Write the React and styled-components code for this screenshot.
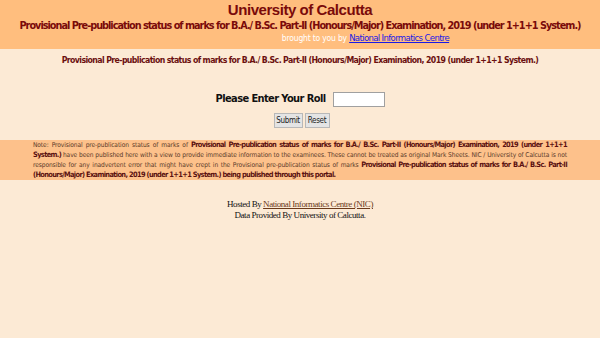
import styled, { createGlobalStyle } from "styled-components";

const Global = createGlobalStyle`
  html, body {
    margin: 0;
    padding: 0;
    background: #fcead5;
  }
  body {
    font-family: "Liberation Sans", Arial, sans-serif;
  }
`;

const Header = styled.header`
  background: #ffbe7e;
  height: 49px;
  text-align: center;
  padding-top: 2px;
  box-sizing: border-box;
`;

const Title = styled.h1`
  margin: 0;
  font: bold 15px/16px "Liberation Sans", Arial, sans-serif;
  letter-spacing: -0.45px;
  color: #7a0a0a;
`;

const SubTitle = styled.h2`
  margin: 1px 0 0;
  font: bold 10.8px/13px "DejaVu Sans Condensed", "DejaVu Sans", sans-serif;
  letter-spacing: -1px;
  color: #7a0a0a;
  white-space: nowrap;
`;

const Credit = styled.div`
  font: 8.5px/11px "DejaVu Sans Condensed", sans-serif;
  letter-spacing: -0.2px;
  color: #ffffff;
  padding-left: 131px;
  a {
    font: 9.5px/11px "DejaVu Sans Condensed", sans-serif;
    letter-spacing: -0.65px;
    color: #1a1ae6;
    text-decoration: underline;
  }
`;

const Heading = styled.h3`
  margin: 4px 0 0;
  text-align: center;
  font: bold 8.7px/14px "DejaVu Sans Condensed", sans-serif;
  letter-spacing: -0.6px;
  color: #6b1010;
  white-space: nowrap;
`;

const Form = styled.form`
  display: flex;
  flex-direction: column;
  align-items: center;
  margin: 24px 0 0;
  gap: 6px;
`;

const RollRow = styled.div`
  display: flex;
  align-items: center;
  gap: 7px;
`;

const Label = styled.label`
  font: bold 11px/16px "DejaVu Sans Condensed", sans-serif;
  letter-spacing: -0.6px;
  color: #111;
`;

const Input = styled.input`
  width: 50px;
  height: 13px;
  border: 1px solid #a0a0a0;
  background: #fff;
  padding: 0;
  box-sizing: content-box;
`;

const Buttons = styled.div`
  display: flex;
  gap: 2px;
  padding-left: 3px;
`;

const Button = styled.button`
  font: 8px/11px "DejaVu Sans Condensed", sans-serif;
  letter-spacing: -0.3px;
  color: #222;
  background: #e4e4e4;
  border: 1px solid #b8b8b8;
  padding: 0;
  width: ${(p) => p.$w}px;
  height: 15px;
`;

const Note = styled.section`
  background: #fdc18b;
  margin-top: 12px;
  height: 40px;
  padding: 0 33px;
  font: 6.6px/10px "DejaVu Sans Condensed", "DejaVu Sans", sans-serif;
  letter-spacing: -0.1px;
  color: #5a3a2a;
  text-align: justify;
  b {
    font: bold 7.4px/10px "DejaVu Sans Condensed", sans-serif;
    letter-spacing: -0.65px;
    color: #5a1010;
  }
`;

const Footer = styled.footer`
  margin-top: 19px;
  text-align: center;
  font: 9px/11px "Liberation Serif", "Times New Roman", serif;
  letter-spacing: -0.45px;
  color: #111;
  a {
    color: #6b3a1a;
    text-decoration: underline;
  }
`;

const course =
  "Provisional Pre-publication status of marks for B.A./ B.Sc. Part-II (Honours/Major) Examination, 2019 (under 1+1+1 System.)";

export default function App() {
  return (
    <>
      <Global />
      <Header>
        <Title>University of Calcutta</Title>
        <SubTitle>{course}</SubTitle>
        <Credit>
          brought to you by <a href="#">National Informatics Centre</a>
        </Credit>
      </Header>
      <Heading>{course}</Heading>
      <Form onSubmit={(e) => e.preventDefault()}>
        <RollRow>
          <Label htmlFor="roll">Please Enter Your Roll</Label>
          <Input id="roll" type="text" />
        </RollRow>
        <Buttons>
          <Button type="submit" $w={29}>Submit</Button>
          <Button type="reset" $w={25}>Reset</Button>
        </Buttons>
      </Form>
      <Note>
        Note: Provisional pre-publication status of marks of <b>{course}</b> have been
        published here with a view to provide immediate information to the examinees.
        These cannot be treated as original Mark Sheets. NIC / University of Calcutta is
        not responsible for any inadvertent error that might have crept in the
        Provisional pre-publication status of marks <b>{course} being published through this portal.</b>
      </Note>
      <Footer>
        Hosted By <a href="#">National Informatics Centre (NIC)</a>
        <br />
        Data Provided By University of Calcutta.
      </Footer>
    </>
  );
}
